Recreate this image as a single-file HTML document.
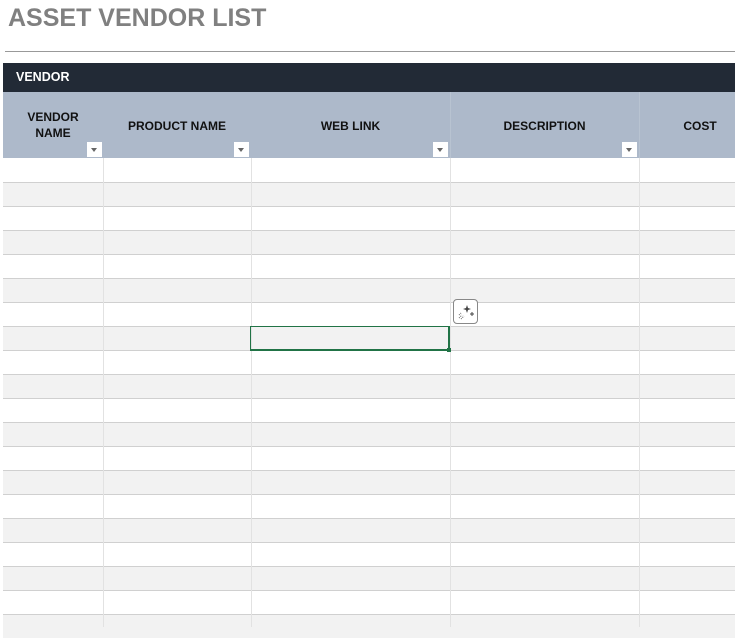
<!DOCTYPE html>
<html><head><style>
body{margin:0;width:735px;height:627px;overflow:hidden;background:#fff;font-family:"Liberation Sans",sans-serif;position:relative}
.a{position:absolute}
.t{left:8px;top:4px;font-size:25px;font-weight:bold;color:#808080;letter-spacing:0px}
.h{font-size:12px;font-weight:bold;color:#111;text-align:center;line-height:16px}
.dd{width:15px;height:15px;background:#fff;top:142px}
.dd:after{content:"";position:absolute;left:4px;top:6px;border-left:3.5px solid transparent;border-right:3.5px solid transparent;border-top:4px solid #666}
</style></head><body>
<div class="a t">ASSET VENDOR LIST</div>
<div class="a" style="left:5px;top:51px;width:730px;height:1px;background:#999"></div>
<div class="a" style="left:3px;top:63px;width:732px;height:29px;background:#222a36"></div>
<div class="a" style="left:16px;top:70px;color:#fff;font-weight:bold;font-size:12.5px">VENDOR</div>
<div class="a" style="left:3px;top:92px;width:732px;height:66px;background:#adb9ca"></div>
<div class="a" style="left:450px;top:92px;width:1px;height:66px;background:#b8c3d1"></div>
<div class="a" style="left:639px;top:92px;width:1px;height:66px;background:#b8c3d1"></div>
<div class="a h" style="left:3px;top:109px;width:100px">VENDOR<br>NAME</div>
<div class="a h" style="left:103px;top:118px;width:148px">PRODUCT NAME</div>
<div class="a h" style="left:251px;top:118px;width:199px">WEB LINK</div>
<div class="a h" style="left:450px;top:118px;width:189px">DESCRIPTION</div>
<div class="a h" style="left:670px;top:118px;width:60px">COST</div>
<div class="a dd" style="left:87px"></div>
<div class="a dd" style="left:234px"></div>
<div class="a dd" style="left:433px"></div>
<div class="a dd" style="left:622px"></div>
<div id="rows"></div>
<script>
var s='';
for(var i=0;i<20;i++){var y=158+i*24;
s+='<div class="a" style="left:3px;top:'+y+'px;width:732px;height:24px;background:'+(i%2?'#f2f2f2':'#fff')+';border-top:'+(i?'1px solid #d0d0d0':'none')+';box-sizing:border-box"></div>';}
[103,251,450,639].forEach(function(x){s+='<div class="a" style="left:'+x+'px;top:158px;width:1px;height:469px;background:#e2e2e2"></div>';});
document.getElementById('rows').innerHTML=s;
</script>
<div class="a" style="left:250px;top:326px;width:197px;height:22px;border:2px solid #217346;border-width:1px 2px 2px 1px"></div>
<div class="a" style="left:447px;top:348px;width:4px;height:4px;background:#217346"></div>
<div class="a" style="left:453px;top:299px;width:23px;height:23px;border:1px solid #888;border-radius:4px;background:#fff">
<svg width="23" height="23" viewBox="0 0 23 23"><path d="M13 5l1 3 3 1-3 1-1 3-1-3-3-1 3-1z" fill="#444"/><path d="M18 12v4M16 14h4" stroke="#444"/><path d="M5 18l3-3M7 19l3-3M5 15l2-2" stroke="#666" stroke-dasharray="1 1"/></svg></div>
</body></html>
